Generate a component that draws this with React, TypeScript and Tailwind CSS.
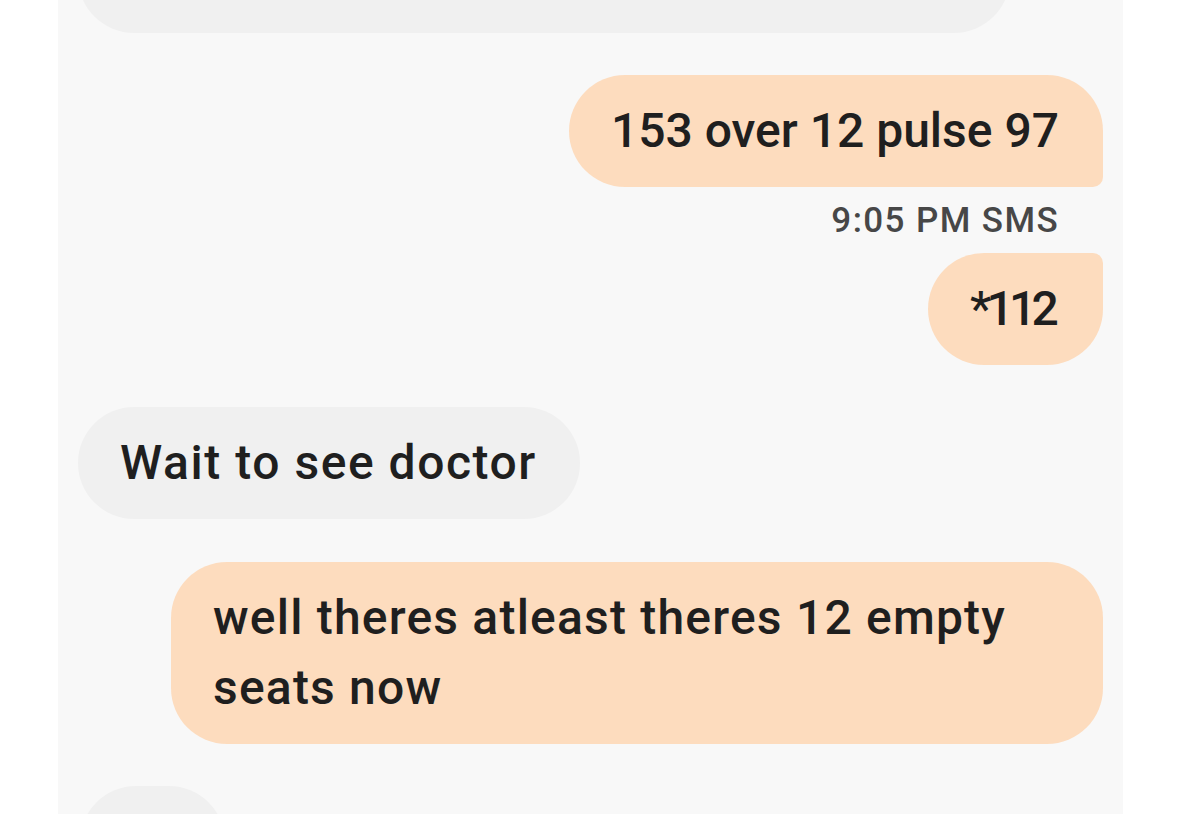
import React from 'react';

const font = { fontFamily: 'Roboto, "Noto Sans", sans-serif' };

const App: React.FC = () => {
  return (
    <div className="w-full h-screen bg-white overflow-hidden" style={font}>
      <div className="ml-[58px] w-[1065px] h-full bg-[#f8f8f8] overflow-hidden px-[20px] flex flex-col">
        {/* previous incoming message, mostly scrolled off */}
        <div className="self-start w-[932px] h-[140px] -mt-[107px] bg-[#f0f0f0] rounded-[56px] shrink-0" />

        <div className="mt-[42px] flex flex-col items-end">
          <div className="bg-[#fddcbe] text-[#1f1f1f] text-[48px] font-medium leading-[70px] py-[21px] pl-[42px] pr-[44px] rounded-[56px] rounded-br-[10px]">
            153 over 12 pulse 97
          </div>
          <div className="h-[66px] flex items-center pr-[44px] text-[35px] tracking-[0.04em] font-medium text-[#474747] leading-none">
            9:05 PM SMS
          </div>
          <div className="bg-[#fddcbe] text-[#1f1f1f] text-[48px] tracking-[-0.1em] font-medium leading-[70px] py-[21px] pl-[42px] pr-[49px] rounded-[56px] rounded-tr-[10px]">
            *112
          </div>
        </div>

        <div className="mt-[42px] self-start bg-[#f0f0f0] text-[#1f1f1f] text-[48px] tracking-[0.032em] font-medium leading-[70px] py-[21px] pl-[42px] pr-[43px] rounded-[56px]">
          Wait to see doctor
        </div>

        <div className="mt-[43px] self-end w-[932px] bg-[#fddcbe] text-[#1f1f1f] text-[48px] tracking-[0.025em] font-medium leading-[70px] py-[21px] pl-[42px] pr-[44px] rounded-[56px]">
          well theres atleast theres 12 empty seats now
        </div>

        <div className="mt-[42px] ml-[2px] self-start w-[145px] h-[112px] bg-[#f0f0f0] rounded-[56px] shrink-0" />
      </div>
    </div>
  );
};

export default App;
